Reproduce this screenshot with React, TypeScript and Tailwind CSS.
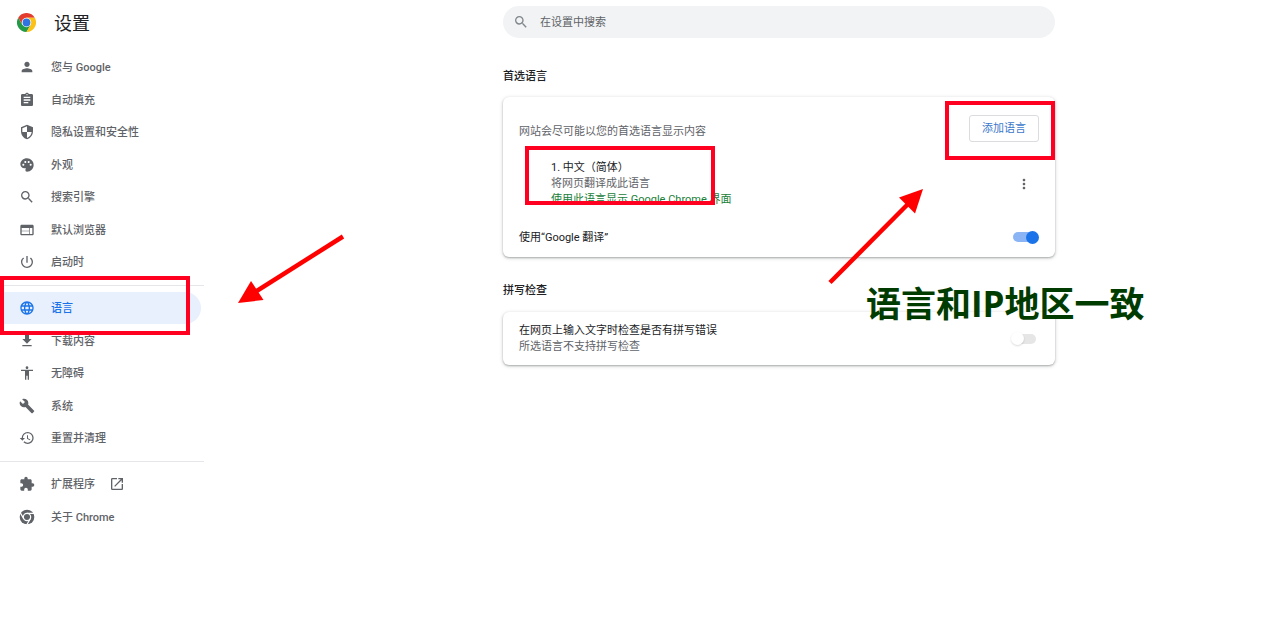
import type { ReactNode } from "react";
import type { IconType } from "react-icons";
import {
  MdPerson, MdAssignment, MdSecurity, MdPalette, MdSearch, MdWeb, MdPowerSettingsNew,
  MdLanguage, MdFileDownload, MdAccessibility, MdBuild, MdRestore, MdExtension,
  MdOpenInNew, MdMoreVert,
} from "react-icons/md";

function FlippedPalette({ className }: { className?: string }) {
  return <MdPalette className={`${className} -scale-x-100`} />;
}

function ChromeMono({ className }: { className?: string }) {
  return (
    <svg viewBox="0 0 24 24" className={className} aria-hidden="true">
      <circle cx="12" cy="12" r="11" fill="currentColor" />
      <g stroke="#fff" strokeWidth="1.800" fill="none">
        <circle cx="12" cy="12" r="5.500" />
        <path d="M12 6.500H23M7.240 14.750 1.740 5.220M16.760 14.750 11.260 24.280" />
      </g>
    </svg>
  );
}

type Item = {
  label: string;
  icon: IconType | typeof ChromeMono;
  active?: boolean;
  external?: boolean;
};

const groups: Item[][] = [
  [
    { label: "您与 Google", icon: MdPerson },
    { label: "自动填充", icon: MdAssignment },
    { label: "隐私设置和安全性", icon: MdSecurity },
    { label: "外观", icon: FlippedPalette },
    { label: "搜索引擎", icon: MdSearch },
    { label: "默认浏览器", icon: MdWeb },
    { label: "启动时", icon: MdPowerSettingsNew },
  ],
  [
    { label: "语言", icon: MdLanguage, active: true },
    { label: "下载内容", icon: MdFileDownload },
    { label: "无障碍", icon: MdAccessibility },
    { label: "系统", icon: MdBuild },
    { label: "重置并清理", icon: MdRestore },
  ],
  [
    { label: "扩展程序", icon: MdExtension, external: true },
    { label: "关于 Chrome", icon: ChromeMono },
  ],
];

function ChromeLogo() {
  return (
    <svg viewBox="0 0 48 48" className="size-[19px] shrink-0" aria-hidden="true">
      <path d="M3.200 12A24 24 0 0 1 44.800 12H24L13.600 30Z" fill="#e33b2e" />
      <path d="M3.200 12A24 24 0 0 0 24 48L34.400 30H13.600Z" fill="#229a48" />
      <path d="M44.800 12A24 24 0 0 1 24 48L34.400 30 24 12Z" fill="#fbc116" />
      <circle cx="24" cy="24" r="12" fill="#fff" />
      <circle cx="24" cy="24" r="9.800" fill="#2f74e0" />
    </svg>
  );
}

function Highlight({ className }: { className: string }) {
  return <span aria-hidden="true" className={`pointer-events-none absolute z-10 border-4 border-[#ff0020] ${className}`} />;
}

function NavItem({ item }: { item: Item }) {
  const Icon = item.icon;
  return (
    <li className="relative odd:h-8 even:h-[33px]">
      <a
        href="#"
        aria-current={item.active ? "page" : undefined}
        className={`mr-[3px] flex h-full items-center rounded-r-full pl-[19px] ${item.active ? "bg-[#e8f0fe] text-[#1a73e8]" : "text-[#5f6368]"}`}
      >
        <Icon className="size-4 shrink-0" />
        <span className="ml-4 pt-0.5 font-medium">{item.label}</span>
        {item.external && <MdOpenInNew className="ml-[14px] size-4" />}
      </a>
      {item.active && <Highlight className="-top-4 left-0 h-[59px] w-[190px]" />}
    </li>
  );
}

function Toggle({ label, checked, disabled }: { label: string; checked?: boolean; disabled?: boolean }) {
  return (
    <label className="relative flex h-[13px] w-[26px] shrink-0 items-center">
      <input type="checkbox" role="switch" aria-label={label} defaultChecked={checked} disabled={disabled} className="peer sr-only" />
      <span className="mr-[3px] h-[10px] flex-1 rounded-full bg-[#e6e6e6] peer-checked:bg-[#8ab4f3]" />
      <span className="absolute -left-0.5 size-[13px] rounded-full bg-white shadow-[0_1px_2px_rgba(0,0,0,0.15)] peer-checked:left-[13px] peer-checked:bg-[#1a73e8] peer-checked:shadow-none" />
    </label>
  );
}

function Card({ children }: { children: ReactNode }) {
  return <div className="rounded-md bg-white px-4 shadow-[0_1px_2px_rgba(60,64,67,0.35),0_1px_4px_rgba(60,64,67,0.2)]">{children}</div>;
}

function Arrows() {
  return (
    <svg className="pointer-events-none absolute top-0 left-0 z-20" width="1271" height="400" viewBox="0 0 1271 400" fill="#f00" stroke="#f00" aria-hidden="true">
      <path d="M343 236.500 255 292" strokeWidth="4.500" />
      <path d="M238 303 251 281 263.500 300Z" stroke="none" />
      <path d="M830 282.500 910 202" strokeWidth="4.500" />
      <path d="M923 189 899 197.500 915 213.500Z" stroke="none" />
    </svg>
  );
}

export default function App() {
  return (
    <div className="relative flex min-h-screen overflow-hidden bg-white font-['Roboto','Noto_Sans_CJK_SC',sans-serif] text-[11px] leading-4 text-[#202124]">
      <aside className="w-[204px] shrink-0">
        <header className="flex h-[51px] items-center gap-[18px] pb-[6px] pl-[17px]">
          <ChromeLogo />
          <h1 className="pt-0.5 text-[18px] leading-6">设置</h1>
        </header>
        <nav>
          {groups.map((group, i) => (
            <ul key={i} className={i > 0 ? "mt-[7px] border-t border-[#e4e6e9] pt-[6px]" : ""}>
              {group.map((item) => <NavItem key={item.label} item={item} />)}
            </ul>
          ))}
        </nav>
      </aside>

      <main className="flex-1 pt-[6px] pr-[216px] pl-[299px]">
        <label className="flex h-8 items-center gap-[11px] rounded-full bg-[#f1f3f4] pl-[10px] text-[#80868b]">
          <MdSearch className="size-4 shrink-0" />
          <input type="text" aria-label="在设置中搜索" placeholder="在设置中搜索" className="min-w-0 flex-1 bg-transparent pt-0.5 outline-none placeholder:text-[#5f6368]" />
        </label>

        <section>
          <h2 className="pt-[31px] pb-3 font-medium">首选语言</h2>
          <Card>
            <div className="flex items-end justify-between pt-[18px] pb-[17px]">
              <p className="leading-5 text-[#5f6368]">网站会尽可能以您的首选语言显示内容</p>
              <div className="relative">
                <button type="button" className="h-[27px] w-[70px] rounded-[3px] border border-[#dadce0] text-[#3b78cc]">添加语言</button>
                <Highlight className="-top-[14px] -right-4 h-[59px] w-[110px]" />
              </div>
            </div>
            <div className="flex items-center justify-between">
              <div className="relative pt-px pl-8">
                <p>1. 中文（简体）</p>
                <p className="text-[#5f6368]">将网页翻译成此语言</p>
                <p className="text-[#188038]">使用此语言显示 Google Chrome 界面</p>
                <Highlight className="-top-[13px] left-[6px] h-[59px] w-[190px]" />
              </div>
              <button type="button" aria-label="更多操作" className="mr-[7px] text-[#5f6368]">
                <MdMoreVert className="size-4" />
              </button>
            </div>
            <div className="mt-[9px] flex h-10 items-center justify-between">
              <p className="pt-0.5">使用“Google 翻译”</p>
              <Toggle label="使用“Google 翻译”" checked />
            </div>
          </Card>
        </section>

        <section>
          <h2 className="pt-[26px] pb-[13px] font-medium">拼写检查</h2>
          <Card>
            <div className="relative flex h-[53px] items-center justify-between">
              <div>
                <p>在网页上输入文字时检查是否有拼写错误</p>
                <p className="text-[#5f6368]">所选语言不支持拼写检查</p>
              </div>
              <Toggle label="在网页上输入文字时检查是否有拼写错误" disabled />
              <p className="pointer-events-none absolute -top-[34px] left-[347px] z-20 font-['Open_Sans','Noto_Sans_CJK_SC',sans-serif] text-[35px] leading-[52px] font-bold whitespace-nowrap text-[#003c00]">
                语言和IP地区一致
              </p>
            </div>
          </Card>
        </section>
      </main>
      <Arrows />
    </div>
  );
}
